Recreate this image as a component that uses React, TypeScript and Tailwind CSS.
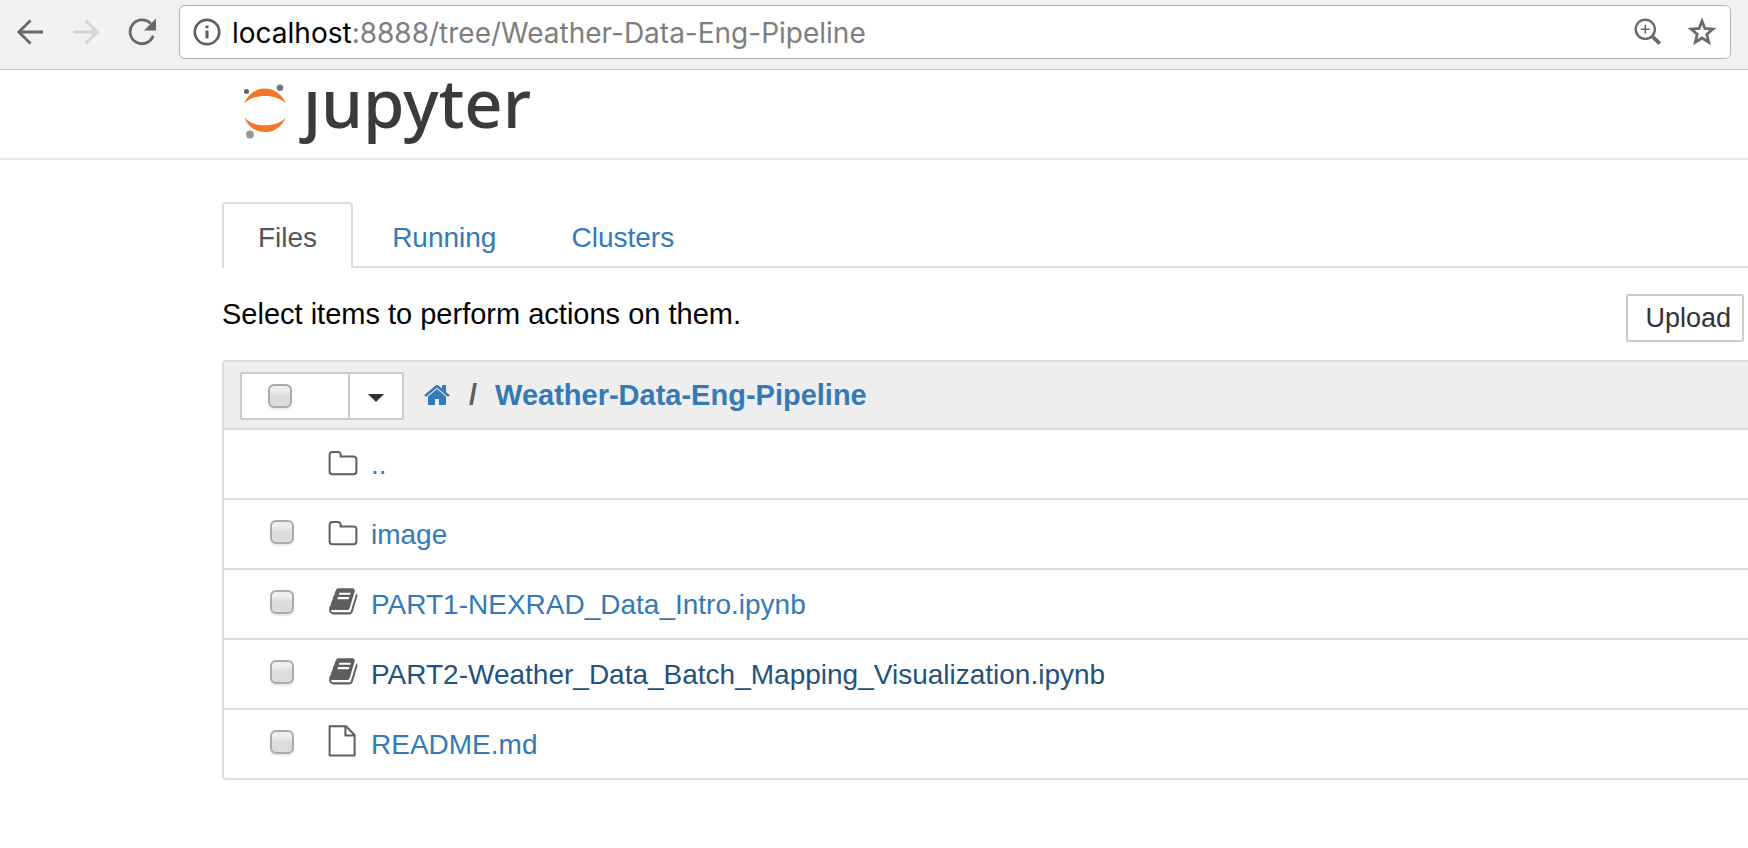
import React from "react";

type IconName = "folder" | "notebook" | "file" | "none";

interface Entry {
  name: string;
  icon: IconName;
  selectable: boolean;
  active?: boolean;
}

const entries: Entry[] = [
  { name: "..", icon: "folder", selectable: false },
  { name: "image", icon: "folder", selectable: true },
  { name: "PART1-NEXRAD_Data_Intro.ipynb", icon: "notebook", selectable: true },
  {
    name: "PART2-Weather_Data_Batch_Mapping_Visualization.ipynb",
    icon: "notebook",
    selectable: true,
    active: true,
  },
  { name: "README.md", icon: "file", selectable: true },
];

function BackIcon() {
  return (
    <svg width="28" height="28" viewBox="0 0 28 28" fill="none" stroke="currentColor" strokeWidth="2.8" aria-hidden="true">
      <path d="M27 14H3M14.500 2.500 2.800 14l11.700 11.500" />
    </svg>
  );
}

function ForwardIcon() {
  return (
    <svg width="28" height="28" viewBox="0 0 28 28" fill="none" stroke="currentColor" strokeWidth="2.8" aria-hidden="true">
      <path d="M1 14h24M13.500 2.500l11.700 11.500-11.700 11.500" />
    </svg>
  );
}

function ReloadIcon() {
  return (
    <svg width="28" height="28" viewBox="0 0 28 28" aria-hidden="true">
      <path d="M25.200 17.800A11.900 11.900 0 1 1 22.600 5.600" fill="none" stroke="currentColor" strokeWidth="2.8" />
      <path d="M28 .500v12H16z" fill="currentColor" />
    </svg>
  );
}

function InfoIcon() {
  return (
    <svg width="28" height="28" viewBox="0 0 28 28" aria-hidden="true">
      <circle cx="14" cy="14" r="12.2" fill="none" stroke="currentColor" strokeWidth="2.7" />
      <path d="M12.500 7.400h3v2.900h-3zM12.500 12.400h3v8.200h-3z" fill="currentColor" />
    </svg>
  );
}

function ZoomIcon() {
  return (
    <svg width="28" height="28" viewBox="0 0 28 28" fill="none" stroke="currentColor" aria-hidden="true">
      <circle cx="11.3" cy="11.3" r="9.600" strokeWidth="2.4" />
      <path d="M11.300 6.800v9M6.800 11.300h9" strokeWidth="1.6" />
      <path d="m18.800 18.800 7 6.800" strokeWidth="3.8" />
    </svg>
  );
}

function StarIcon() {
  return (
    <svg width="30" height="30" viewBox="0 0 30 30" aria-hidden="true">
      <path
        d="M15 4.100l2.900 7.300 8 .700-6.100 5.200 1.900 7.900-6.700-4.200-6.700 4.200 1.900-7.900-6.100-5.200 8-.700z"
        fill="none"
        stroke="currentColor"
        strokeWidth="2.8"
      />
    </svg>
  );
}

function HomeIcon() {
  return (
    <svg width="28" height="28" viewBox="0 0 1792 1792" fill="currentColor" aria-hidden="true">
      <path d="M1472 992v480q0 26-19 45t-45 19h-384v-384h-256v384h-384q-26 0-45-19t-19-45v-480q0-1 .5-3t.5-3l575-474 575 474q1 2 1 6zm223-69l-62 74q-8 9-21 11h-3q-13 0-21-7l-692-577-692 577q-12 8-24 7-13-2-21-11l-62-74q-8-10-7-23.5t11-21.5l719-599q32-26 76-26t76 26l244 204v-195q0-14 9-23t23-9h192q14 0 23 9t9 23v408l219 182q10 8 11 21.5t-7 23.5z" />
    </svg>
  );
}

function EntryIcon({ name }: { name: IconName }) {
  if (name === "folder") {
    return (
      <svg width="30" height="32" viewBox="0 0 30 32" fill="none" stroke="currentColor" strokeWidth="2" aria-hidden="true">
        <path d="M4.400 7h5.400a2.800 2.800 0 0 1 2.800 2.800v1.600h13a2.800 2.800 0 0 1 2.800 2.800v12.200a2.800 2.800 0 0 1-2.800 2.800H4.400a2.800 2.800 0 0 1-2.800-2.800V9.800a2.800 2.800 0 0 1 2.800-2.800z" />
      </svg>
    );
  }
  if (name === "notebook") {
    return (
      <svg width="30" height="32" viewBox="0 -64 1760 1877" fill="currentColor" aria-hidden="true">
        <path d="M1703 478q40 57 18 129l-275 906q-19 64-76.500 107.500t-122.500 43.500h-923q-77 0-148.500-53.500t-99.500-131.500q-24-67-2-127 0-4 3-27t4-37q1-8-3-21.500t-3-19.500q2-11 8-21t16.500-23.500 16.500-23.500q23-38 45-91.500t30-91.500q3-10 .5-30t-.5-28q3-11 17-28t17-23q21-36 42-92t25-90q1-9-2.500-32t.5-28q4-13 22-30.500t22-22.500q19-26 42.500-84.500t27.500-96.500q1-8-3-25.500t-2-26.500q2-8 9-18t18-23 17-21q8-12 16.500-30.500t15-35 16-36 19.500-32 26.500-23.500 36-11.500 47.500 5.500l-1 3q38-9 51-9h761q74 0 114 56t18 130l-274 906q-36 119-71.500 153.500t-128.500 34.500h-869q-27 0-38 15-11 16-1 43 24 70 144 70h923q29 0 56-15.500t35-41.500l300-987q7-22 5-57 38 15 59 43zm-1064 2q-4 13 2 22.500t20 9.500h608q13 0 25.500-9.500t16.500-22.500l21-64q4-13-2-22.500t-20-9.500h-608q-13 0-25.500 9.500t-16.500 22.500zm-83 256q-4 13 2 22.500t20 9.500h608q13 0 25.500-9.500t16.500-22.500l21-64q4-13-2-22.500t-20-9.500h-608q-13 0-25.500 9.500t-16.500 22.500z" />
      </svg>
    );
  }
  if (name === "file") {
    return (
      <svg width="30" height="32" viewBox="0 0 30 32" fill="none" stroke="currentColor" strokeWidth="2" strokeLinejoin="round" aria-hidden="true">
        <path d="M1.600 1.200h16.400l8.600 8.800v20.400h-25zM17.400 1.400v9.200h9" />
      </svg>
    );
  }
  return null;
}

function JupyterMark() {
  return (
    <svg width="44" height="56" viewBox="0 0 44 56" aria-hidden="true">
      <path d="M1.200 20.500C5 11 13 5.600 22 5.600s17 5.400 20.900 14.900C38 15.500 30.500 13 22 13S6 15.500 1.200 20.500z" fill="#f37726" />
      <path d="M1.200 34.200C6 39.800 13.500 42.300 22 42.300s16-2.500 20.900-8.100C39 43.700 31 49.100 22 49.100S5 43.700 1.200 34.200z" fill="#f37726" />
      <circle cx="3.500" cy="8.500" r="2.500" fill="#616262" />
      <circle cx="37" cy="4.700" r="3.300" fill="#767677" />
      <circle cx="7" cy="51.500" r="3.900" fill="#989798" />
    </svg>
  );
}

function Checkbox({ label }: { label: string }) {
  return (
    <input
      type="checkbox"
      aria-label={label}
      className="block size-6 shrink-0 appearance-none rounded-md border-2 border-[#ababab] bg-linear-to-b from-[#efefef] from-20% to-[#dcdcdc] to-50% shadow-[0_2px_1px_rgba(0,0,0,0.08)]"
    />
  );
}

function BrowserBar() {
  return (
    <div className="flex h-[70px] items-start border-b border-[#cbcbcb] bg-[#f1f1f1] pt-[5px] pr-[17px] pl-4">
      <div className="flex h-[54px] w-[163px] shrink-0 items-center gap-7 text-[#696969]">
        <button type="button" aria-label="Back">
          <BackIcon />
        </button>
        <button type="button" aria-label="Forward" className="text-[#d4d4d4]">
          <ForwardIcon />
        </button>
        <button type="button" aria-label="Reload">
          <ReloadIcon />
        </button>
      </div>
      <div className="flex h-[54px] min-w-0 grow items-center rounded-md border border-[#b2b2b2] bg-white pr-[13px] pl-[13px] text-[#5f5f5f]">
        <button type="button" aria-label="Site information">
          <InfoIcon />
        </button>
        <p className="ml-[11px] grow pt-[2px] font-['Inter',sans-serif] text-[28px] leading-9 text-[#7e7e7e]">
          <span className="text-black">localhost</span>:8888/tree/Weather-Data-Eng-Pipeline
        </p>
        <div className="flex items-center gap-[25px] text-[#6a6a6a]">
          <button type="button" aria-label="Zoom">
            <ZoomIcon />
          </button>
          <button type="button" aria-label="Bookmark this page">
            <StarIcon />
          </button>
        </div>
      </div>
    </div>
  );
}

export default function App() {
  return (
    <div className="min-h-screen overflow-x-hidden bg-white font-['Liberation_Sans',Arial,sans-serif] text-[28px] leading-10 text-black">
      <BrowserBar />

      <header className="flex h-[90px] border-b-2 border-[#e7e7e7] pt-[13px] pl-[243px]">
        <a href="#tree" aria-label="jupyter" className="flex items-start gap-4 text-[#3b3b3c]">
          <JupyterMark />
          <span className="font-['Noto_Sans',sans-serif] text-[67px] leading-[38px] font-medium">ȷupyter</span>
        </a>
      </header>

      <main className="pt-[42px] pl-[222px]">
        <nav aria-label="Sections" className="flex border-b-2 border-[#ddd] text-[#337ab7]">
          <a href="#files" className="-mb-[2px] rounded-t border-2 border-b-0 border-[#ddd] bg-white px-[34px] pt-[14px] pb-[10px] text-[#555]">
            Files
          </a>
          <a href="#running" className="ml-[3px] px-9 pt-4 pb-2">
            Running
          </a>
          <a href="#clusters" className="ml-[3px] px-9 pt-4 pb-2">
            Clusters
          </a>
        </nav>

        <div className="flex items-start justify-between pt-[26px] pr-1">
          <p className="text-[29px]">Select items to perform actions on them.</p>
          <button
            type="button"
            className="h-12 rounded-xs border-2 border-[#ccc] bg-white pr-[11px] pl-[17px] text-[27px] leading-10 text-[#333]"
          >
            Upload
          </button>
        </div>

        <section aria-label="Files" className="mt-[18px] rounded-l border-2 border-r-0 border-[#ddd]">
          <div className="flex h-[66px] items-center bg-[#eee] pl-4">
            <div className="mt-[2px] flex h-12 rounded-xs border-2 border-[#ccc] bg-white">
              <div className="flex w-[106px] items-center pl-[26px]">
                <Checkbox label="Select all" />
              </div>
              <button
                type="button"
                aria-label="Selection menu"
                className="flex w-[54px] items-center justify-center border-l-2 border-[#ccc] pt-1 text-[#333]"
              >
                <svg width="16" height="8" viewBox="0 0 16 8" aria-hidden="true">
                  <path d="M0 0h16L8 8z" fill="currentColor" />
                </svg>
              </button>
            </div>
            <nav aria-label="Breadcrumb" className="ml-[19px] flex items-center text-[29px] font-bold text-[#337ab7]">
              <a href="#home" aria-label="Home">
                <HomeIcon />
              </a>
              <span className="mx-[18px] text-[#5e5e5e]">/</span>
              <a href="#pipeline">Weather-Data-Eng-Pipeline</a>
            </nav>
          </div>
          <ul>
            {entries.map((entry) => (
              <li key={entry.name} className="flex h-[70px] items-center border-t-2 border-[#ddd] pl-[46px]">
                <div className="w-[58px] shrink-0 pb-1">{entry.selectable && <Checkbox label={`Select ${entry.name}`} />}</div>
                <span className="shrink-0 pb-[6px] text-[#5e5e5e]">
                  <EntryIcon name={entry.icon} />
                </span>
                <a href="#entry" className={entry.active ? "ml-[13px] pt-[2px] text-[#23527c]" : "ml-[13px] pt-[2px] text-[#337ab7]"}>
                  {entry.name}
                </a>
              </li>
            ))}
          </ul>
        </section>
      </main>
    </div>
  );
}
